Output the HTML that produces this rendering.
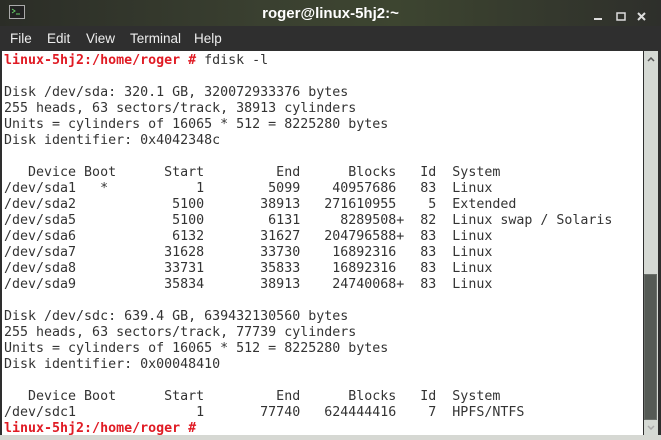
<!DOCTYPE html><html><head><style>
body{margin:0;width:661px;height:440px;overflow:hidden;background:#2e2e2e;position:relative;font-family:"Liberation Sans",sans-serif}
#title{position:absolute;left:0;top:0;width:661px;height:26px;background:linear-gradient(90deg,#2b2d27,#3a4030 40%,#3d4530 60%,#2e2f2b);color:#fff;font-size:15px;font-weight:bold;text-align:center;line-height:28px}
#menu{position:absolute;left:0;top:26px;width:661px;height:25px;background:#2f2f2f;color:#eee;font-size:13.5px}
#menu span{position:absolute;top:5px}
#term{position:absolute;left:2px;top:51px;width:641px;height:384px;background:#fff;overflow:hidden}
pre{margin:0;padding:2px 0 0 2px;font-family:"DejaVu Sans Mono","Liberation Mono",monospace;font-size:13.3px;line-height:16px;color:#333}
.r{color:#e01b24;font-weight:bold}
#sb{position:absolute;left:644px;top:51px;width:14px;height:384px;background:#d5d9d4}
#thumb{position:absolute;left:0;top:223px;width:13px;height:146px;background:#555a55;border:1px solid #6a6f6a;box-sizing:border-box}
#bot{position:absolute;left:0;top:435px;width:661px;height:5px;background:#d6d8d3}
</style></head><body>
<div id="title"><svg style="position:absolute;left:9px;top:5px" width="16" height="14"><rect x="0.5" y="0.5" width="15" height="13" fill="#222" stroke="#aaa"/><path d="M3 4l3 2-3 2M7 9h4" stroke="#6c6" fill="none"/></svg>roger@linux-5hj2:~
<svg style="position:absolute;left:590px;top:12px" width="60" height="10"><path d="M4 7h8" stroke="#ddd" stroke-width="2"/><rect x="27" y="1" width="8" height="7" fill="none" stroke="#ddd" stroke-width="1.5"/><path d="M48 1l7 7M55 1l-7 7" stroke="#ddd" stroke-width="2"/></svg></div>
<div id="menu"><span style="left:10px">File</span><span style="left:47px">Edit</span><span style="left:86px">View</span><span style="left:130px">Terminal</span><span style="left:194px">Help</span></div>
<div id="term"><pre><span class="r">linux-5hj2:/home/roger #</span> fdisk -l

Disk /dev/sda: 320.1 GB, 320072933376 bytes
255 heads, 63 sectors/track, 38913 cylinders
Units = cylinders of 16065 * 512 = 8225280 bytes
Disk identifier: 0x4042348c

   Device Boot      Start         End      Blocks   Id  System
/dev/sda1   *           1        5099    40957686   83  Linux
/dev/sda2            5100       38913   271610955    5  Extended
/dev/sda5            5100        6131     8289508+  82  Linux swap / Solaris
/dev/sda6            6132       31627   204796588+  83  Linux
/dev/sda7           31628       33730    16892316   83  Linux
/dev/sda8           33731       35833    16892316   83  Linux
/dev/sda9           35834       38913    24740068+  83  Linux

Disk /dev/sdc: 639.4 GB, 639432130560 bytes
255 heads, 63 sectors/track, 77739 cylinders
Units = cylinders of 16065 * 512 = 8225280 bytes
Disk identifier: 0x00048410

   Device Boot      Start         End      Blocks   Id  System
/dev/sdc1               1       77740   624444416    7  HPFS/NTFS
<span class="r">linux-5hj2:/home/roger #</span> </pre></div>
<div id="sb"><svg style="position:absolute;left:3px;top:6px" width="8" height="5"><path d="M1 4l3-3 3 3" stroke="#555" fill="none" stroke-width="1.5"/></svg><div id="thumb"></div><svg style="position:absolute;left:3px;top:374px" width="8" height="5"><path d="M1 1l3 3 3-3" stroke="#aaa" fill="none" stroke-width="1.5"/></svg></div>
<div id="bot"></div>
</body></html>
